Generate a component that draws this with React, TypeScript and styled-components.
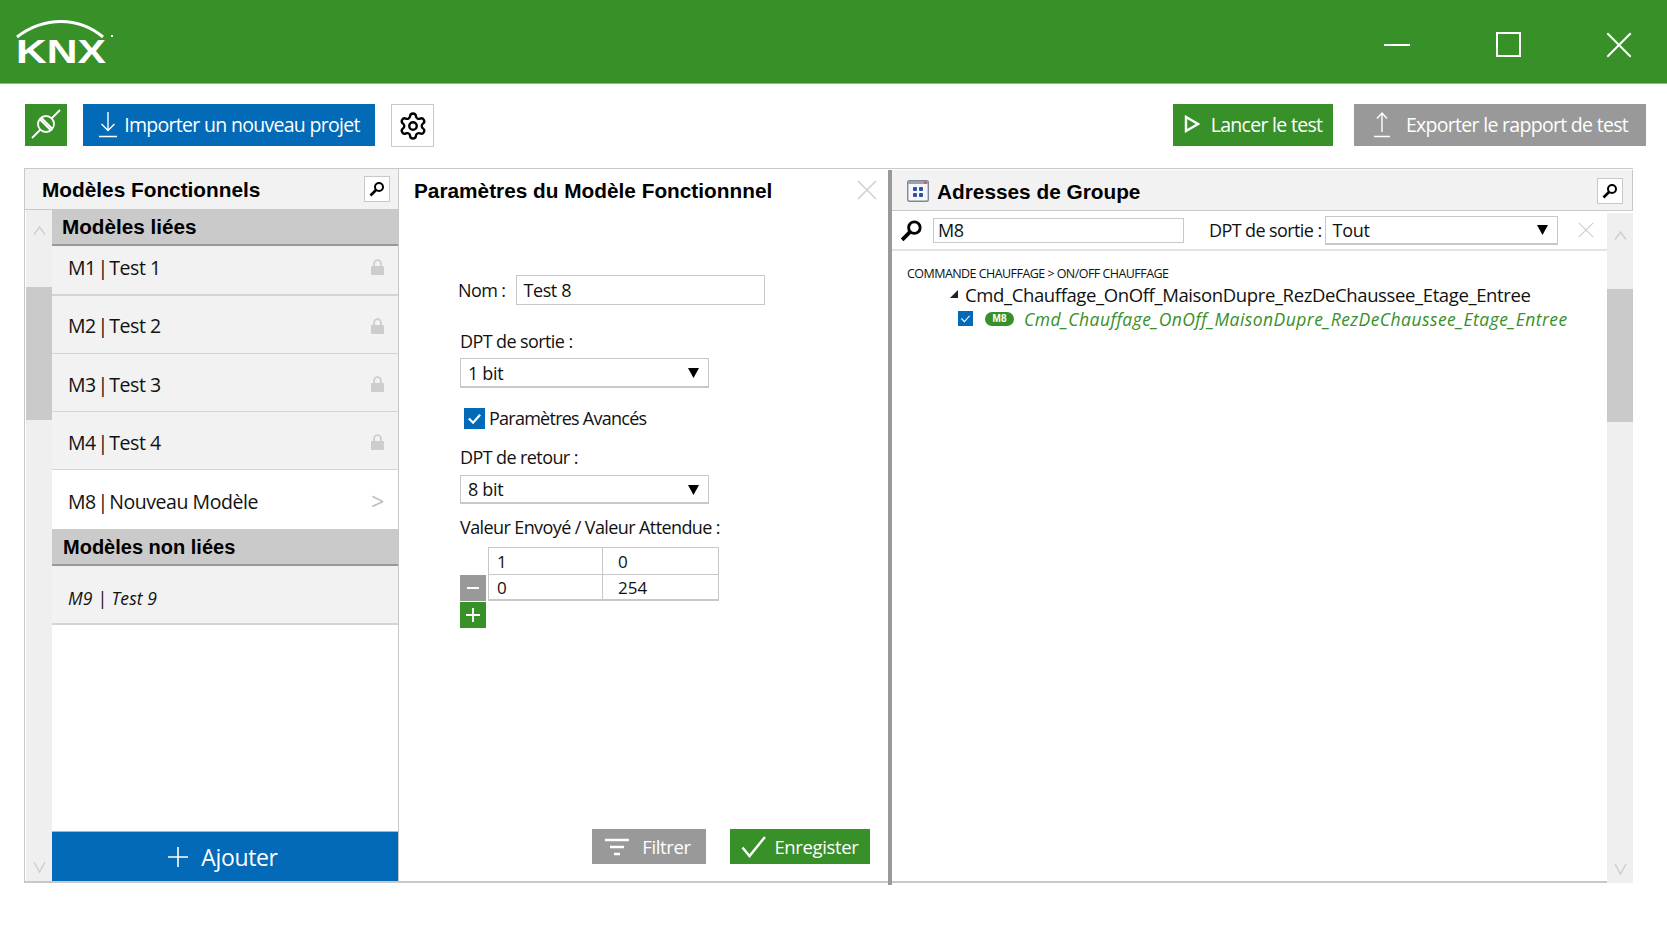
import React from "react";
import styled, { createGlobalStyle } from "styled-components";
import { Settings } from "lucide-react";

const colors = {
  green: "#389029",
  blue: "#026ab6",
  gray: "#999999",
  light: "#f2f2f2",
  line: "#c8c8c8",
  section: "#cacaca",
};

const GlobalStyle = createGlobalStyle`
  html, body { margin: 0; padding: 0; background: #fff; }
  body { font-family: "Open Sans", "Noto Sans", sans-serif; color: #111; overflow: hidden; }
  * { box-sizing: border-box; }
`;

const Page = styled.div`
  width: 1667px;
  height: 938px;
  display: flex;
  flex-direction: column;
`;
const TitleBar = styled.header`
  height: 84px;
  flex: none;
  background: ${colors.green};
  border-bottom: 1px solid #8cbf84;
  display: flex;
  align-items: center;
  justify-content: space-between;
  padding: 0 0 0 16px;
`;
const WindowControls = styled.div`
  display: flex;
  align-items: center;
  gap: 85px;
  padding-right: 35px;
  padding-top: 6px;
`;
const Toolbar = styled.div`
  height: 84px;
  flex: none;
  display: flex;
  align-items: flex-start;
  padding: 20px 21px 0 25px;
`;
const ToolGroup = styled.div<{ $gap: number }>`
  display: flex;
  gap: ${(p) => p.$gap}px;
  align-items: flex-start;
`;
const Spacer = styled.div`
  flex: 1;
`;
const ToolButton = styled.button<{ $bg: string; $w: number; $gap?: number; $fg?: string }>`
  width: ${(p) => p.$w}px;
  height: 42px;
  border: none;
  padding: 0 0 2px;
  background: ${(p) => p.$bg};
  color: ${(p) => p.$fg || "#fff"};
  font: 400 19.5px "Open Sans", sans-serif;
  letter-spacing: -0.7px;
  display: flex;
  align-items: center;
  justify-content: center;
  gap: ${(p) => p.$gap ?? 6}px;
`;
const GearButton = styled(ToolButton)`
  border: 1px solid ${colors.line};
  height: 43px;
  padding: 0;
`;
const Main = styled.main`
  margin-left: 24px;
  width: 1609px;
  height: 715px;
  display: flex;
  border-top: 1px solid ${colors.line};
`;
const LeftPanel = styled.section`
  width: 375px;
  flex: none;
  display: flex;
  flex-direction: column;
  border-left: 1px solid ${colors.line};
  border-right: 1px solid ${colors.line};
  border-bottom: 2px solid ${colors.line};
`;
const PanelHeader = styled.div`
  height: 41px;
  flex: none;
  background: ${colors.light};
  border-bottom: 1px solid ${colors.line};
  display: flex;
  align-items: center;
  justify-content: space-between;
  padding: 0 8px 0 17px;
`;
const RightHeader = styled(PanelHeader)`
  border-right: 1px solid ${colors.line};
  padding: 2px 9px 0 15px;
`;
const HeaderTitle = styled.div`
  display: flex;
  align-items: center;
  gap: 8px;
`;
const PanelTitle = styled.h2`
  margin: 0;
  padding-top: 2px;
  font: 700 20.8px "Liberation Sans", Arial, sans-serif;
  color: #000;
`;
const MagnifierButton = styled.div`
  width: 26px;
  height: 26px;
  background: #fff;
  border: 1px solid ${colors.line};
  display: flex;
  align-items: center;
  justify-content: center;
`;
const PanelBody = styled.div`
  flex: 1;
  min-height: 0;
  display: flex;
`;
const ScrollTrack = styled.div<{ $thumbTop: number }>`
  width: 26px;
  flex: none;
  margin-left: 1px;
  background: #efefef;
  display: flex;
  flex-direction: column;
  align-items: center;
  padding-top: 16px;
  padding-bottom: 8px;
  & > svg:first-child {
    margin-bottom: ${(p) => p.$thumbTop}px;
  }
`;
const ScrollThumb = styled.div`
  width: 100%;
  height: 133px;
  background: ${colors.section};
  flex: none;
`;
const ScrollFill = styled.div`
  flex: 1;
`;
const List = styled.div`
  flex: 1;
  min-width: 0;
  display: flex;
  flex-direction: column;
`;
const SectionHeader = styled.div<{ $h: number; $pl: number; $fs: number; $pt?: number }>`
  height: ${(p) => p.$h}px;
  flex: none;
  background: ${colors.section};
  border-bottom: 2px solid ${colors.gray};
  font: 700 ${(p) => p.$fs}px "Liberation Sans", Arial, sans-serif;
  color: #000;
  display: flex;
  align-items: center;
  padding: ${(p) => p.$pt ?? 0}px 0 0 ${(p) => p.$pl}px;
`;
const ModelRow = styled.div<{ $h: number; $active?: boolean; $thick?: boolean; $nudge: number }>`
  height: ${(p) => p.$h}px;
  flex: none;
  background: ${(p) => (p.$active ? "#fff" : colors.light)};
  border-bottom: ${(p) => (p.$active ? "none" : `${p.$thick ? 2 : 1}px solid #d4d4d4`)};
  display: flex;
  align-items: center;
  justify-content: space-between;
  padding: ${(p) => (p.$nudge > 0 ? p.$nudge : 0)}px 14px ${(p) => (p.$nudge < 0 ? -p.$nudge : 0)}px 16px;
  font-size: 19.5px;
  letter-spacing: -0.45px;
`;
const Separator = styled.span`
  margin: 0 -3px;
`;
const ItalicRow = styled(ModelRow)`
  font-style: italic;
  font-size: 17.5px;
  letter-spacing: 0.1px;
  border-bottom-width: 2px;
`;
const ChevronMark = styled.span`
  color: #bdbdbd;
  font-size: 23px;
  line-height: 1;
`;
const ListFill = styled.div`
  flex: 1;
`;
const AddButton = styled.button`
  height: 50px;
  flex: none;
  background: ${colors.blue};
  color: #fff;
  border: none;
  border-top: 1px solid #9fb9cd;
  font: 400 23px "Open Sans", sans-serif;
  letter-spacing: -0.35px;
  display: flex;
  align-items: center;
  justify-content: center;
  gap: 13px;
  padding: 0 4px 0 0;
`;
const MiddlePanel = styled.section`
  width: 489px;
  flex: none;
  display: flex;
  flex-direction: column;
  padding: 0 0 0 15px;
  border-bottom: 2px solid ${colors.line};
`;
const MiddleHead = styled.div`
  height: 42px;
  flex: none;
  display: flex;
  align-items: center;
  justify-content: space-between;
  padding: 0 11px 0 0;
`;
const Form = styled.div`
  flex: 1;
  display: flex;
  flex-direction: column;
  padding: 64px 0 0 46px;
  font-size: 18px;
  letter-spacing: -0.6px;
`;
const NameRow = styled.div`
  display: flex;
  align-items: center;
  gap: 11px;
  margin-left: -2px;
  height: 30px;
`;
const FieldLabel = styled.div<{ $mt?: number }>`
  height: 24px;
  line-height: 24px;
  margin-top: ${(p) => p.$mt ?? 0}px;
`;
const TextBox = styled.input<{ $w: number; $h: number; $ml?: number; $pl: number }>`
  width: ${(p) => p.$w}px;
  height: ${(p) => p.$h}px;
  margin-left: ${(p) => p.$ml ?? 0}px;
  border: 1px solid ${colors.line};
  background: #fff;
  padding: 0 ${(p) => p.$pl}px;
  font: inherit;
  color: inherit;
  letter-spacing: -0.4px;
  outline: none;
  border-radius: 0;
`;
const SelectBox = styled.div<{ $w: number; $h: number; $mt?: number }>`
  width: ${(p) => p.$w}px;
  height: ${(p) => p.$h}px;
  margin-top: ${(p) => p.$mt ?? 0}px;
  flex: none;
  background: #fff;
  border: 1px solid ${colors.line};
  border-bottom-width: 2px;
  display: flex;
  align-items: center;
  justify-content: space-between;
  padding: 0 9px 0 7px;
  letter-spacing: -0.3px;
`;
const CheckRow = styled.div`
  display: flex;
  align-items: center;
  gap: 4px;
  margin: 19px 0 0 4px;
  height: 22px;
  letter-spacing: -0.75px;
`;
const CheckBox = styled.span<{ $size: number }>`
  width: ${(p) => p.$size}px;
  height: ${(p) => p.$size}px;
  flex: none;
  background: ${colors.blue};
  display: flex;
  align-items: center;
  justify-content: center;
`;
const ValueArea = styled.div`
  display: grid;
  grid-template-columns: 26px 231px;
  column-gap: 2px;
  grid-template-rows: 27px 27px 27px;
  margin-top: 8px;
`;
const ValueTable = styled.div`
  grid-column: 2;
  grid-row: 1 / span 2;
  display: grid;
  grid-template-columns: 113px 1fr;
  grid-template-rows: 26px 26px;
  border: 1px solid ${colors.line};
  border-bottom-width: 2px;
  font-size: 17px;
  letter-spacing: 0;
`;
const ValueCell = styled.div<{ $last?: boolean; $bottom?: boolean }>`
  display: flex;
  align-items: center;
  padding-left: ${(p) => (p.$last ? 15 : 8)}px;
  border-left: ${(p) => (p.$last ? `1px solid ${colors.line}` : "none")};
  border-top: ${(p) => (p.$bottom ? `1px solid ${colors.line}` : "none")};
`;
const SquareButton = styled.button<{ $bg: string; $row: number }>`
  grid-column: 1;
  grid-row: ${(p) => p.$row};
  width: 26px;
  height: 26px;
  align-self: end;
  background: ${(p) => p.$bg};
  border: none;
  padding: 0;
  display: flex;
  align-items: center;
  justify-content: center;
`;
const FormFooter = styled.div`
  height: 52px;
  flex: none;
  display: flex;
  justify-content: flex-end;
  align-items: flex-start;
  gap: 24px;
  padding-right: 18px;
`;
const FooterButton = styled.button<{ $bg: string; $w: number; $gap: number; $pr?: number }>`
  width: ${(p) => p.$w}px;
  height: 35px;
  background: ${(p) => p.$bg};
  color: #fff;
  border: none;
  padding: 0 ${(p) => p.$pr ?? 0}px 0 0;
  font: 400 18.5px "Open Sans", sans-serif;
  letter-spacing: -0.35px;
  display: flex;
  align-items: center;
  justify-content: center;
  gap: ${(p) => p.$gap}px;
`;
const RightPanel = styled.section`
  flex: 1;
  min-width: 0;
  display: flex;
  flex-direction: column;
  border-left: 4px solid ${colors.gray};
  margin-top: 1px;
  margin-bottom: -2px;
`;
const RightBody = styled.div`
  flex: 1;
  min-height: 0;
  display: flex;
  padding-bottom: 2px;
`;
const RightContent = styled.div`
  flex: 1;
  min-width: 0;
  display: flex;
  flex-direction: column;
  border-bottom: 2px solid ${colors.line};
`;
const FilterRow = styled.div`
  height: 40px;
  flex: none;
  border-bottom: 2px solid #e4e4e4;
  display: flex;
  align-items: center;
  padding: 0 13px 0 8px;
  font-size: 18px;
  letter-spacing: -0.6px;
`;
const FilterLabel = styled.span`
  margin: 0 3px 0 25px;
`;
const FilterFill = styled.span`
  flex: 1;
`;
const TreeArea = styled.div`
  flex: 1;
  padding: 13px 0 0 15px;
`;
const PathLabel = styled.div`
  font-size: 12.5px;
  letter-spacing: -0.55px;
  height: 20px;
  line-height: 20px;
`;
const TreeRow = styled.div`
  display: flex;
  align-items: center;
  gap: 7px;
  height: 24px;
  padding: 0 0 4px 43px;
  font-size: 18.5px;
  letter-spacing: -0.38px;
`;
const LeafRow = styled.div`
  display: flex;
  align-items: center;
  height: 21px;
  padding-left: 51px;
  font-size: 17.5px;
  font-style: italic;
  letter-spacing: 0.45px;
  color: ${colors.green};
`;
const Pill = styled.span`
  width: 29px;
  height: 14px;
  border-radius: 7px;
  background: ${colors.green};
  color: #fff;
  font: 700 10px "Liberation Sans", Arial, sans-serif;
  letter-spacing: 0;
  display: flex;
  align-items: center;
  justify-content: center;
  margin: 0 10px 0 12px;
`;
const RightScroll = styled(ScrollTrack)`
  margin-left: 0;
  margin-top: 2px;
  padding-top: 18px;
`;

const Magnifier = ({ size = 16 }: { size?: number }) => (
  <svg width={size} height={size} viewBox="0 0 16 16" fill="none" stroke="#000">
    <circle cx="10" cy="6" r="4" strokeWidth="2" />
    <path d="M7 9L1.5 14.5" strokeWidth="2.6" />
  </svg>
);
const Close = ({ size, color }: { size: number; color: string }) => (
  <svg width={size} height={size} viewBox="0 0 20 20" stroke={color} strokeWidth="1.5" fill="none">
    <path d="M1 1L19 19M19 1L1 19" />
  </svg>
);
const Caret = () => (
  <svg width="11" height="11" viewBox="0 0 11 11" fill="#000">
    <path d="M0 1H11L5.5 11Z" />
  </svg>
);
const ScrollUp = () => (
  <svg width="13" height="9" viewBox="0 0 13 9" fill="none" stroke="#cfcfcf" strokeWidth="1.5">
    <path d="M1 8.5L6.5 1L12 8.5" />
  </svg>
);
const ScrollDown = () => (
  <svg width="13" height="12" viewBox="0 0 13 12" fill="none" stroke="#cfcfcf" strokeWidth="1.5">
    <path d="M1 1L6.5 11L12 1" />
  </svg>
);
const Lock = () => (
  <svg width="13" height="16" viewBox="0 0 13 16" fill="#cdcdcd">
    <path d="M1 7H2.2V4.5a4.3 4.3 0 0 1 8.6 0V7H12a1 1 0 0 1 1 1v7a1 1 0 0 1-1 1H1a1 1 0 0 1-1-1V8a1 1 0 0 1 1-1ZM4 7H9V4.5a2.5 2.5 0 0 0-5 0Z" />
  </svg>
);
const Check = ({ size, width }: { size: number; width: number }) => (
  <svg width={size} height={size} viewBox="0 0 16 16" fill="none" stroke="#fff" strokeWidth={width}>
    <path d="M2 8L6.5 12.5L14 4" />
  </svg>
);
const SaveCheck = () => (
  <svg width="26" height="24" viewBox="0 0 26 24" fill="none" stroke="#fff" strokeWidth="2.4">
    <path d="M1.5 12.5L8.5 21L24 2" />
  </svg>
);
const KnxLogo = () => (
  <svg width="100" height="56" viewBox="0 -4 100 56" fill="none">
    <path d="M1 19C14 9 30 3.5 45 3.5C60 3.5 75 9 87 19" stroke="#fff" strokeWidth="3" />
    <rect x="95" y="17" width="2" height="2" fill="#fff" />
    <text x="0" y="45" fill="#fff" fontFamily="Liberation Sans, Arial, sans-serif" fontWeight="700" fontSize="33.5" textLength="90" lengthAdjust="spacingAndGlyphs">
      KNX
    </text>
  </svg>
);
const Plug = () => (
  <svg width="30" height="30" viewBox="0 0 30 30" fill="none" stroke="#fff" strokeWidth="1.8">
    <path d="M1 29L9.5 20.5M20.5 9.5L29 1" />
    <circle cx="15" cy="15" r="8" />
    <path d="M10 8.5L21.5 20M8.5 10L20 21.5" />
  </svg>
);
const DownloadIcon = () => (
  <svg width="20" height="28" viewBox="0 0 20 28" fill="none" stroke="#fff" strokeWidth="1.4">
    <path d="M10 2V20M3.5 14L10 20.5L16.5 14M1 26.5H19" />
  </svg>
);
const UploadIcon = () => (
  <svg width="20" height="28" viewBox="0 0 20 28" fill="none" stroke="#fff" strokeWidth="1.4">
    <path d="M10 22V3M5 8.5L10 3L15 8.5M2 26.5H18" />
  </svg>
);
const PlayIcon = () => (
  <svg width="16" height="18" viewBox="0 0 16 18" fill="none" stroke="#fff" strokeWidth="2.4">
    <path d="M2 2V16L14 9Z" />
  </svg>
);
const FilterIcon = () => (
  <svg width="26" height="18" viewBox="0 0 26 18" stroke="#fff" strokeWidth="2.4">
    <path d="M1 2H25M6 9H20M10 16H16" />
  </svg>
);
const PlusIcon = ({ size, width }: { size: number; width: number }) => (
  <svg width={size} height={size} viewBox="0 0 20 20" stroke="#fff" strokeWidth={width}>
    <path d="M10 0V20M0 10H20" />
  </svg>
);
const AddressIcon = () => (
  <svg width="22" height="22" viewBox="0 0 22 22">
    <rect x="0.7" y="0.7" width="20.6" height="20.6" rx="1.5" fill="#f4f6fb" stroke="#7f8791" strokeWidth="1.4" />
    <rect x="1" y="1" width="20" height="3" fill="#9aa2ab" />
    <rect x="17" y="1.5" width="2.5" height="2" fill="#d1495b" />
    <g fill="#2f4ea3">
      <rect x="6" y="7" width="4" height="4" rx="1" />
      <rect x="12" y="7" width="4" height="4" rx="1" />
      <rect x="6" y="13" width="4" height="4" rx="1" />
      <rect x="12" y="13" width="4" height="4" rx="1" />
    </g>
  </svg>
);

const linked = [
  { code: "M1", name: "Test 1", h: 50, thick: true, nudge: -6 },
  { code: "M2", name: "Test 2", h: 58, nudge: 2 },
  { code: "M3", name: "Test 3", h: 58, nudge: 3 },
  { code: "M4", name: "Test 4", h: 58, nudge: 3 },
];

export default function App() {
  return (
    <Page>
      <GlobalStyle />
      <TitleBar>
        <KnxLogo />
        <WindowControls>
          <svg width="28" height="4" viewBox="0 0 28 4" stroke="#fff" strokeWidth="2">
            <path d="M1 2H27" />
          </svg>
          <svg width="25" height="25" viewBox="0 0 25 25" fill="none" stroke="#fff" strokeWidth="2">
            <rect x="1" y="1" width="23" height="23" />
          </svg>
          <Close size={26} color="#fff" />
        </WindowControls>
      </TitleBar>
      <Toolbar>
        <ToolGroup $gap={16}>
          <ToolButton $bg={colors.green} $w={42}>
            <Plug />
          </ToolButton>
          <ToolButton $bg={colors.blue} $w={292}>
            <DownloadIcon />
            Importer un nouveau projet
          </ToolButton>
          <GearButton $bg="#fff" $w={43}>
            <Settings size={30} color="#000" strokeWidth={1.9} />
          </GearButton>
        </ToolGroup>
        <Spacer />
        <ToolGroup $gap={21}>
          <ToolButton $bg={colors.green} $w={160} $gap={11}>
            <PlayIcon />
            Lancer le test
          </ToolButton>
          <ToolButton $bg={colors.gray} $w={292} $gap={14}>
            <UploadIcon />
            Exporter le rapport de test
          </ToolButton>
        </ToolGroup>
      </Toolbar>
      <Main>
        <LeftPanel>
          <PanelHeader>
            <PanelTitle>Modèles Fonctionnels</PanelTitle>
            <MagnifierButton>
              <Magnifier />
            </MagnifierButton>
          </PanelHeader>
          <PanelBody>
            <ScrollTrack $thumbTop={52}>
              <ScrollUp />
              <ScrollThumb />
              <ScrollFill />
              <ScrollDown />
            </ScrollTrack>
            <List>
              <SectionHeader $h={36} $pl={10} $fs={20.7}>Modèles liées</SectionHeader>
              {linked.map((m) => (
                <ModelRow key={m.code} $h={m.h} $thick={m.thick} $nudge={m.nudge}>
                  <span>
                    {m.code} <Separator>|</Separator> {m.name}
                  </span>
                  <Lock />
                </ModelRow>
              ))}
              <ModelRow $h={59} $active $nudge={3}>
                <span>
                  M8 <Separator>|</Separator> Nouveau Modèle
                </span>
                <ChevronMark>&gt;</ChevronMark>
              </ModelRow>
              <SectionHeader $h={37} $pl={11} $fs={20} $pt={2}>Modèles non liées</SectionHeader>
              <ItalicRow $h={59} $nudge={6}>M9 | Test 9</ItalicRow>
              <ListFill />
              <AddButton>
                <PlusIcon size={20} width={1.6} />
                Ajouter
              </AddButton>
            </List>
          </PanelBody>
        </LeftPanel>
        <MiddlePanel>
          <MiddleHead>
            <PanelTitle>Paramètres du Modèle Fonctionnnel</PanelTitle>
            <Close size={20} color="#cfcfcf" />
          </MiddleHead>
          <Form>
            <NameRow>
              <span>Nom :</span>
              <TextBox $w={249} $h={30} $pl={6} value="Test 8" readOnly />
            </NameRow>
            <FieldLabel $mt={24}>DPT de sortie :</FieldLabel>
            <SelectBox $w={249} $h={30} $mt={5}>
              1 bit
              <Caret />
            </SelectBox>
            <CheckRow>
              <CheckBox $size={21}>
                <Check size={15} width={2.4} />
              </CheckBox>
              Paramètres Avancés
            </CheckRow>
            <FieldLabel $mt={16}>DPT de retour :</FieldLabel>
            <SelectBox $w={249} $h={29} $mt={6}>
              8 bit
              <Caret />
            </SelectBox>
            <FieldLabel $mt={11}>Valeur Envoyé / Valeur Attendue :</FieldLabel>
            <ValueArea>
              <ValueTable>
                <ValueCell>1</ValueCell>
                <ValueCell $last>0</ValueCell>
                <ValueCell $bottom>0</ValueCell>
                <ValueCell $last $bottom>254</ValueCell>
              </ValueTable>
              <SquareButton $bg={colors.gray} $row={2}>
                <svg width="14" height="2" viewBox="0 0 14 2" stroke="#fff" strokeWidth="2">
                  <path d="M1 1H13" />
                </svg>
              </SquareButton>
              <SquareButton $bg={colors.green} $row={3}>
                <PlusIcon size={14} width={2.6} />
              </SquareButton>
            </ValueArea>
          </Form>
          <FormFooter>
            <FooterButton $bg={colors.gray} $w={114} $gap={12} $pr={3}>
              <FilterIcon />
              Filtrer
            </FooterButton>
            <FooterButton $bg={colors.green} $w={140} $gap={7}>
              <SaveCheck />
              Enregister
            </FooterButton>
          </FormFooter>
        </MiddlePanel>
        <RightPanel>
          <RightHeader>
            <HeaderTitle>
              <AddressIcon />
              <PanelTitle>Adresses de Groupe</PanelTitle>
            </HeaderTitle>
            <MagnifierButton>
              <Magnifier />
            </MagnifierButton>
          </RightHeader>
          <RightBody>
            <RightContent>
              <FilterRow>
                <Magnifier size={23} />
                <TextBox $w={251} $h={25} $ml={10} $pl={4} value="M8" readOnly />
                <FilterLabel>DPT de sortie :</FilterLabel>
                <SelectBox $w={233} $h={29}>
                  Tout
                  <Caret />
                </SelectBox>
                <FilterFill />
                <Close size={16} color="#cfcfcf" />
              </FilterRow>
              <TreeArea>
                <PathLabel>COMMANDE CHAUFFAGE &gt; ON/OFF CHAUFFAGE</PathLabel>
                <TreeRow>
                  <svg width="8" height="8" viewBox="0 0 8 8" fill="#222">
                    <path d="M8 0V8H0Z" />
                  </svg>
                  Cmd_Chauffage_OnOff_MaisonDupre_RezDeChaussee_Etage_Entree
                </TreeRow>
                <LeafRow>
                  <CheckBox $size={15}>
                    <Check size={11} width={1.6} />
                  </CheckBox>
                  <Pill>M8</Pill>
                  Cmd_Chauffage_OnOff_MaisonDupre_RezDeChaussee_Etage_Entree
                </LeafRow>
              </TreeArea>
            </RightContent>
            <RightScroll $thumbTop={49}>
              <ScrollUp />
              <ScrollThumb />
              <ScrollFill />
              <ScrollDown />
            </RightScroll>
          </RightBody>
        </RightPanel>
      </Main>
    </Page>
  );
}
